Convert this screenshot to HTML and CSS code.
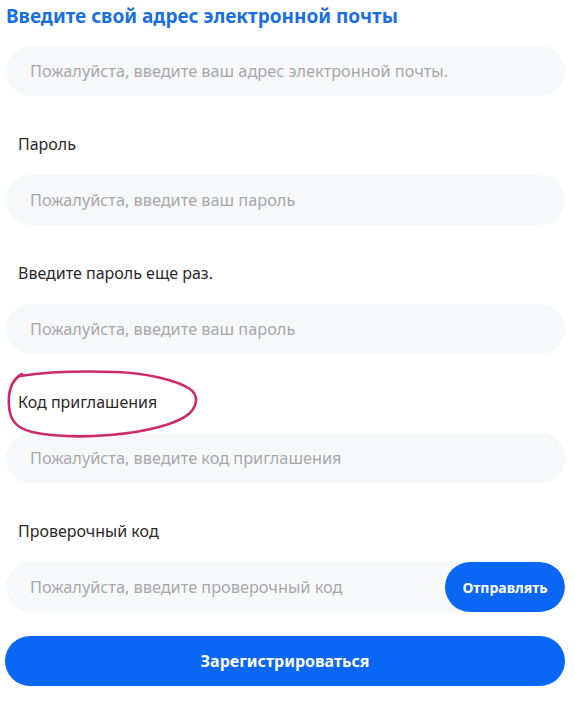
FILE: index.html
```html
<!DOCTYPE html>
<html lang="ru">
<head>
<meta charset="utf-8">
<link rel="stylesheet" href="styles.css">
</head>
<body>
<div class="form">
  <h1 class="title">Введите свой адрес электронной почты</h1>
  <div class="field"><span class="ph ph-clip">Пожалуйста, введите ваш адрес электронной почты.</span></div>

  <label class="label">Пароль</label>
  <div class="field"><span class="ph">Пожалуйста, введите ваш пароль</span></div>

  <label class="label">Введите пароль еще раз.</label>
  <div class="field"><span class="ph">Пожалуйста, введите ваш пароль</span></div>

  <label class="label">Код приглашения
    <svg class="mark" width="200" height="74" viewBox="0 0 200 74">
      <path d="M14 8 C40 4 80 3 110 4 C140 5 170 12 184 21 C192 27 192 36 184 45 C172 56 140 64 104 67 C80 69 50 69 26 64 C10 60 4 52 3 38 C2 24 5 12 16 6" fill="none" stroke="#cc2a6a" stroke-width="2.6" stroke-linecap="round" stroke-linejoin="round"/>
    </svg>
  </label>
  <div class="field"><span class="ph">Пожалуйста, введите код приглашения</span></div>

  <label class="label">Проверочный код</label>
  <div class="field field-btn"><span class="ph">Пожалуйста, введите проверочный код</span><button class="send">Отправлять</button></div>

  <button class="submit">Зарегистрироваться</button>
</div>
</body>
</html>
```

FILE: styles.css
```css
html, body {
  margin: 0;
  padding: 0;
  background: #ffffff;
}
body {
  font-family: "Noto Sans", "Open Sans", sans-serif;
}
.form {
  display: flex;
  flex-direction: column;
  padding: 0 10px 0 6px;
}
.title {
  margin: 0;
  height: 32px;
  line-height: 32px;
  font-size: 19px;
  font-weight: 700;
  color: #1a6fe0;
}
.field {
  height: 50px;
  border-radius: 25px;
  background: #f7f8fa;
  display: flex;
  align-items: center;
  padding-left: 24px;
  margin-top: 14px;
  overflow: hidden;
}
.label + .field {
  margin-top: 20px;
}
.ph {
  color: #a6a8ac;
  font-size: 16.3px;
  white-space: nowrap;
  flex: 1;
}
.ph-clip {
  flex: 0 0 418px;
  overflow: hidden;
}
.label {
  position: relative;
  display: block;
  margin-top: 37px;
  padding-left: 12px;
  font-size: 16px;
  line-height: 22px;
  color: #2a2a2a;
}
.mark {
  position: absolute;
  left: 0;
  top: -23px;
}
.field-btn {
  padding-right: 0;
}
.send {
  flex: 0 0 120px;
  height: 50px;
  border: none;
  border-radius: 25px;
  background: #0a66f5;
  color: #fff;
  font-family: inherit;
  font-size: 14px;
  font-weight: 700;
}
.submit {
  margin-top: 24px;
  height: 50px;
  border: none;
  border-radius: 25px;
  background: #0a66f5;
  color: #fff;
  font-family: inherit;
  font-size: 16px;
  font-weight: 700;
  margin-left: -1px;
}
```
